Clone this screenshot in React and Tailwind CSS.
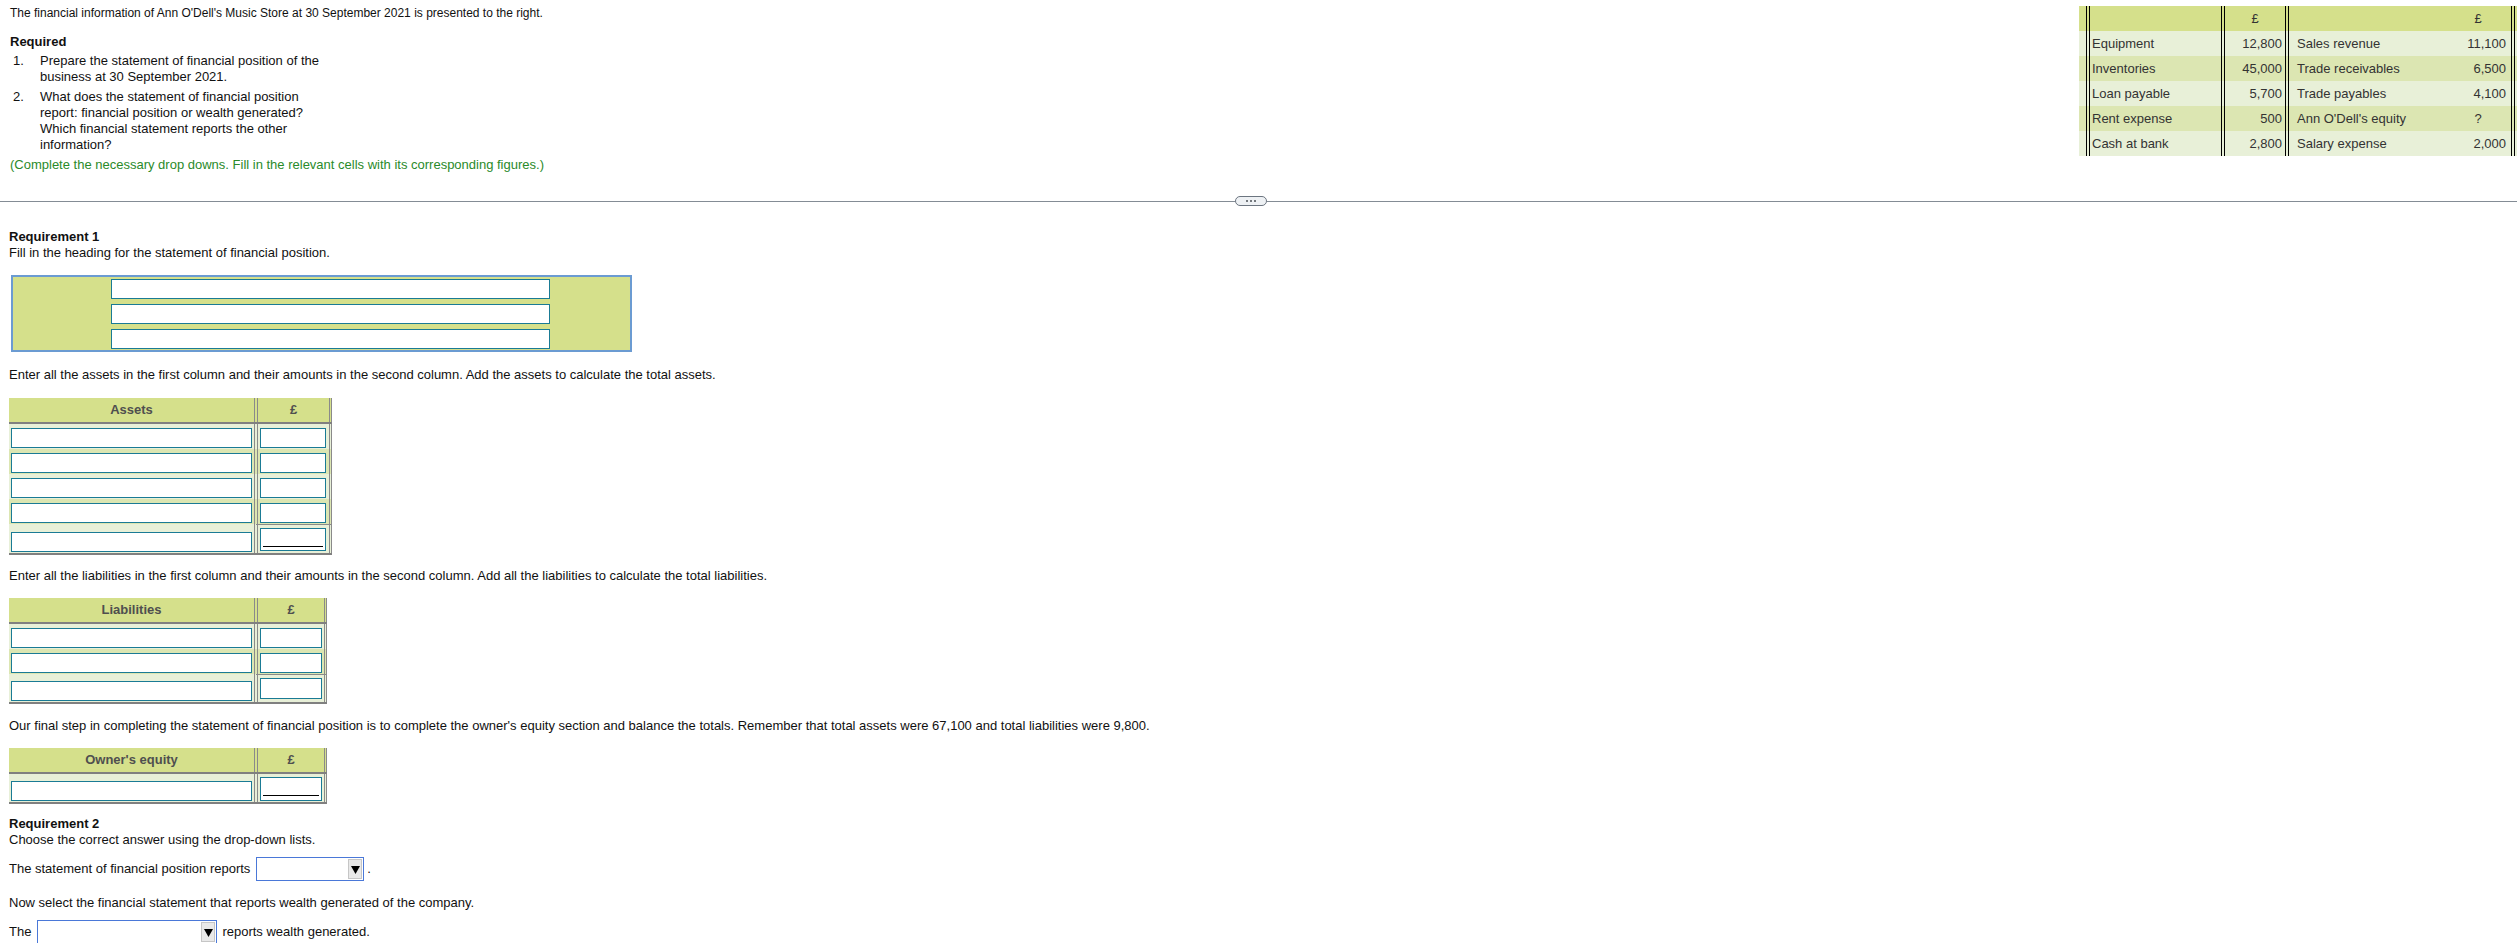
import React from 'react';

const light = 'bg-[#e8f0d8]';
const dark = 'bg-[#dce6b2]';

function Field({ className = '', children }) {
  return <div className={`border border-[#1a7b95] bg-white ${className}`}>{children}</div>;
}

function Select({ className = '' }) {
  return (
    <div className={`flex h-[24px] border border-[#4a78d8] bg-white ${className}`}>
      <div className="flex-1" />
      <div className="my-[1px] mr-[1px] flex w-[14px] items-center justify-center border border-[#c6c6c6] bg-[#e9e9e9]">
        <svg width="9" height="9" viewBox="0 0 9 9">
          <polygon points="0,1 9,1 4.5,9" fill="#000" />
        </svg>
      </div>
    </div>
  );
}

const dataRows = [
  ['Equipment', '12,800', 'Sales revenue', '11,100'],
  ['Inventories', '45,000', 'Trade receivables', '6,500'],
  ['Loan payable', '5,700', 'Trade payables', '4,100'],
  ['Rent expense', '500', "Ann O'Dell's equity", '?'],
  ['Cash at bank', '2,800', 'Salary expense', '2,000'],
];

function DataTable() {
  const cell = 'border-l-4 border-double border-black';
  return (
    <div className="mt-[6px] w-[438px] text-[#333]">
      <div className="flex h-[25px] bg-[#d5e08b]">
        <div className="w-[7px]" />
        <div className={`w-[135px] ${cell}`} />
        <div className={`flex w-[64px] items-center justify-center ${cell}`}>£</div>
        <div className={`flex w-[226px] ${cell}`}>
          <div className="flex-1" />
          <div className="flex w-[56px] items-center justify-center">£</div>
          <div className="w-[5px]" />
        </div>
        <div className={`w-[6px] ${cell}`} />
      </div>
      {dataRows.map((r, i) => (
        <div key={r[0]} className={`flex h-[25px] ${i % 2 === 0 ? light : dark}`}>
          <div className="w-[7px]" />
          <div className={`flex w-[135px] items-center pl-[2px] ${cell}`}>{r[0]}</div>
          <div className={`flex w-[64px] items-center justify-end pr-[3px] ${cell}`}>{r[1]}</div>
          <div className={`flex w-[226px] items-center ${cell}`}>
            <div className="flex-1 pl-[8px]">{r[2]}</div>
            <div className={`w-[56px] ${r[3] === '?' ? 'text-center' : 'text-right'}`}>{r[3]}</div>
            <div className="w-[5px]" />
          </div>
          <div className={`w-[6px] ${cell}`} />
        </div>
      ))}
    </div>
  );
}

const amtBorder = 'border-l-4 border-r-[3px] border-double border-[#8a8a8a]';

function HeadRow({ title, amtW }) {
  return (
    <div className="flex h-[26px] border-b-2 border-[#808080] bg-[#d5e08b] font-bold text-[#4f4f4f]">
      <div className="flex w-[245px] items-center justify-center">{title}</div>
      <div className={`flex items-center justify-center ${amtW} ${amtBorder}`}>£</div>
    </div>
  );
}

function BodyRow({ bg, amtW, boxW }) {
  return (
    <div className={`flex h-[25px] ${bg}`}>
      <div className="w-[245px] pl-[2px] pt-[4px]">
        <Field className="h-[20px] w-[241px]" />
      </div>
      <div className={`pl-[2px] pt-[4px] ${amtW} ${amtBorder}`}>
        <Field className={`h-[20px] ${boxW}`} />
      </div>
    </div>
  );
}

export default function App() {
  return (
    <div className="min-h-[943px] w-[2517px] bg-white font-['Liberation_Sans',Arial,sans-serif] text-[13px] leading-[16px] text-[#111]">
      <div className="flex items-start justify-between">
        <div className="pl-[10px] pt-[5px]">
          <p className="text-[12px]">The financial information of Ann O'Dell's Music Store at 30 September 2021 is presented to the right.</p>
          <p className="mt-[13px] font-bold">Required</p>
          <ol className="mt-[3px]">
            <li className="flex">
              <span className="w-[30px] pl-[3px]">1.</span>
              <span className="w-[290px]">Prepare the statement of financial position of the business at 30 September 2021.</span>
            </li>
            <li className="mt-[4px] flex">
              <span className="w-[30px] pl-[3px]">2.</span>
              <span className="w-[290px]">
                What does the statement of financial position report: financial position or wealth generated? Which financial statement reports the other information?
              </span>
            </li>
          </ol>
          <p className="mt-[4px] text-[#2a8a2a]">(Complete the necessary drop downs. Fill in the relevant cells with its corresponding figures.)</p>
        </div>
        <DataTable />
      </div>

      <div className="mt-[23px] flex h-[10px] items-center">
        <div className="h-px w-[1235px] bg-[#848c95]" />
        <div className="flex h-[10px] w-[32px] items-center justify-center gap-[2px] rounded-full border border-[#6c7580] bg-[#eef1f4]">
          <span className="h-[2px] w-[2px] rounded-full bg-[#4a4f56]" />
          <span className="h-[2px] w-[2px] rounded-full bg-[#4a4f56]" />
          <span className="h-[2px] w-[2px] rounded-full bg-[#4a4f56]" />
        </div>
        <div className="h-px flex-1 bg-[#848c95]" />
      </div>

      <div className="pl-[9px]">
        <p className="mt-[23px] font-bold">Requirement 1</p>
        <p>Fill in the heading for the statement of financial position.</p>

        <div className="ml-[2px] mt-[14px] flex h-[77px] w-[621px] flex-col gap-[5px] border-2 border-[#6b9bd2] bg-[#d5e08b] pl-[98px] pt-[2px]">
          <Field className="h-[20px] w-[439px]" />
          <Field className="h-[20px] w-[439px]" />
          <Field className="h-[20px] w-[439px]" />
        </div>

        <p className="mt-[15px]">Enter all the assets in the first column and their amounts in the second column. Add the assets to calculate the total assets.</p>

        <div className="mt-[15px] w-[323px] border-b-2 border-[#808080]">
          <HeadRow title="Assets" amtW="w-[78px]" />
          <BodyRow bg={light} amtW="w-[78px]" boxW="w-[66px]" />
          <BodyRow bg={dark} amtW="w-[78px]" boxW="w-[66px]" />
          <BodyRow bg={light} amtW="w-[78px]" boxW="w-[66px]" />
          <BodyRow bg={dark} amtW="w-[78px]" boxW="w-[66px]" />
          <div className={`flex h-[29px] ${light}`}>
            <div className="w-[245px] pl-[2px] pt-[8px]">
              <Field className="h-[20px] w-[241px]" />
            </div>
            <div className={`w-[78px] border-t pl-[2px] pt-[3px] ${amtBorder}`}>
              <Field className="h-[23px] w-[66px] px-[2px] pt-[17px]">
                <div className="h-px bg-black" />
              </Field>
            </div>
          </div>
        </div>

        <p className="mt-[13px]">Enter all the liabilities in the first column and their amounts in the second column. Add all the liabilities to calculate the total liabilities.</p>

        <div className="mt-[14px] w-[318px] border-b-2 border-[#808080]">
          <HeadRow title="Liabilities" amtW="w-[73px]" />
          <BodyRow bg={light} amtW="w-[73px]" boxW="w-[62px]" />
          <BodyRow bg={dark} amtW="w-[73px]" boxW="w-[62px]" />
          <div className={`flex h-[28px] ${light}`}>
            <div className="w-[245px] pl-[2px] pt-[7px]">
              <Field className="h-[20px] w-[241px]" />
            </div>
            <div className={`w-[73px] border-t pl-[2px] pt-[3px] ${amtBorder}`}>
              <Field className="h-[21px] w-[62px]" />
            </div>
          </div>
        </div>

        <p className="mt-[14px]">Our final step in completing the statement of financial position is to complete the owner's equity section and balance the totals. Remember that total assets were 67,100 and total liabilities were 9,800.</p>

        <div className="mt-[14px] w-[318px] border-b-2 border-[#808080]">
          <HeadRow title="Owner's equity" amtW="w-[73px]" />
          <div className={`flex h-[28px] ${light}`}>
            <div className="w-[245px] pl-[2px] pt-[7px]">
              <Field className="h-[20px] w-[241px]" />
            </div>
            <div className={`w-[73px] pl-[2px] pt-[3px] ${amtBorder}`}>
              <Field className="h-[24px] w-[62px] px-[2px] pt-[17px]">
                <div className="h-px bg-black" />
              </Field>
            </div>
          </div>
        </div>

        <p className="mt-[12px] font-bold">Requirement 2</p>
        <p>Choose the correct answer using the drop-down lists.</p>

        <div className="mt-[9px] flex items-center">
          <span>The statement of financial position reports</span>
          <Select className="ml-[6px] w-[108px]" />
          <span className="ml-[3px]">.</span>
        </div>

        <p className="mt-[14px]">Now select the financial statement that reports wealth generated of the company.</p>

        <div className="mt-[9px] flex items-center">
          <span>The</span>
          <Select className="ml-[6px] w-[180px]" />
          <span className="ml-[5px]">reports wealth generated.</span>
        </div>
      </div>
    </div>
  );
}
